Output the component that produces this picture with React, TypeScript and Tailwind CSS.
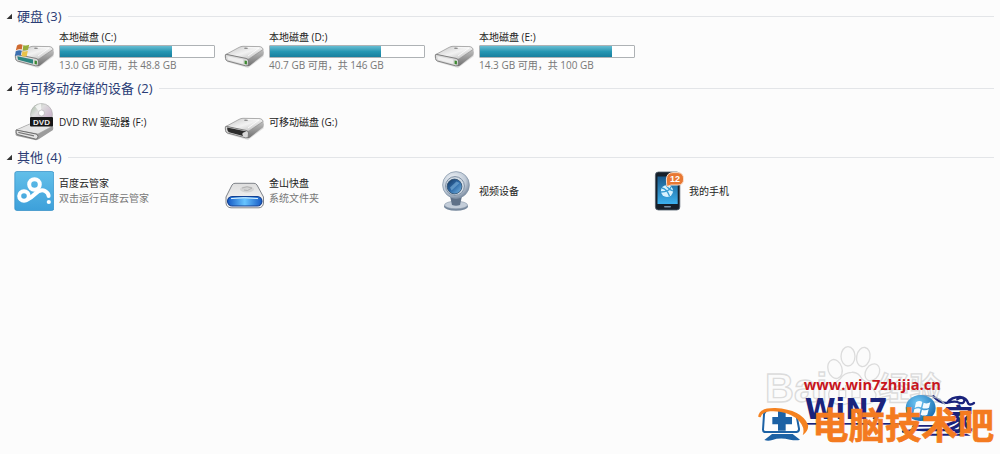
import { useState, type ReactNode } from "react";

function DriveShape({ variant = "local" }: { variant?: "local" | "system" | "removable" }) {
  return (
    <svg viewBox="0 0 40 40" className="h-10 w-10 shrink-0" aria-hidden="true">
      <defs>
        <linearGradient id={`top-${variant}`} x1="0" y1="0" x2="1" y2="1">
          <stop offset="0" stopColor="#c4c4c4" />
          <stop offset="0.5" stopColor="#f2f2f2" />
          <stop offset="1" stopColor="#adadad" />
        </linearGradient>
        <linearGradient id={`side-${variant}`} x1="0" y1="0" x2="0" y2="1">
          <stop offset="0" stopColor="#c4c4c4" />
          <stop offset="1" stopColor="#6f6f6f" />
        </linearGradient>
      </defs>
      <path d="M3 32 L24 38 L40 26 L38 24 L4 29Z" fill="#000" opacity="0.12" />
      <path d="M24 28 L39 19 Q40.4 22 39.4 25 L26 35.5 Q24 37 22 35.5Z" fill={`url(#side-${variant})`} />
      <path
        d="M1.8 24.5 L15 17.4 Q17 16.3 19 16.3 L36 16.6 Q38.4 17 39.2 19.4 L25 29 Q24 29.5 22 29.2Z"
        fill={`url(#top-${variant})`}
        stroke="#8f8f8f"
        strokeWidth="0.7"
      />
      <path d="M22 17.5 L35 18 L24 26" fill="none" stroke="#fff" strokeWidth="1" opacity="0.8" />
      <ellipse cx="22" cy="18.3" rx="2" ry="0.8" fill="#8b8b8b" />
      <path
        d="M2 24.3 L22 28.4 Q24.5 29 24.5 31 L24.2 34.5 Q24 36.4 21.5 35.8 L3.5 31 Q1.6 30.4 1.5 28.4 L1.3 26 Q1.2 24.3 2 24.3Z"
        fill="#d9d9d9"
        stroke="#777"
        strokeWidth="0.9"
      />
      {variant === "removable" ? (
        <path d="M3.2 25.6 L22.5 29.6 Q16.5 30.6 19 34 L5 30.2 Q3 29.4 3.2 25.6Z" fill="#2c2c2c" />
      ) : (
        <>
          <path d="M3.3 26.2 L19 29.6 L19 33.7 L4 29.7Z" fill={variant === "system" ? "#2c8580" : "#efefef"} />
          <path d="M20.6 30.4 L22.9 31 V34.6 L20.6 34Z" fill="#3d8a30" />
        </>
      )}
      {variant === "system" && (
        <g>
          <path d="M3 15.5 Q6 13.4 8.6 14.8 L7.8 19.6 Q5 18.4 1.8 20.4Z" fill="#cf6a31" />
          <path d="M9.4 15 Q12 16.3 15.2 14.8 L14 19.8 Q11.5 21 8.6 19.9Z" fill="#95ad3a" />
          <path d="M1.7 21.3 Q5 19.4 7.7 20.6 L6.8 25.6 Q4 24.5 1 26Z" fill="#3b6fb0" />
          <path d="M8.5 20.9 Q11 22 13.8 20.8 L12.8 26 Q10 27.2 7.6 26Z" fill="#e8c24a" />
        </g>
      )}
    </svg>
  );
}

function DvdIcon() {
  return (
    <svg viewBox="0 0 40 40" className="h-10 w-10 shrink-0" aria-hidden="true">
      <defs>
        <linearGradient id="disc" x1="0" y1="0" x2="1" y2="1">
          <stop offset="0" stopColor="#9db59c" />
          <stop offset="0.35" stopColor="#dedede" />
          <stop offset="0.7" stopColor="#ccb9cd" />
          <stop offset="1" stopColor="#a9a9a9" />
        </linearGradient>
      </defs>
      <path d="M2 28 L18 21 L37 22 Q40 24 39 28 L25 37 Q23 38.5 21 38 L3 34 Q1 33 1.5 30Z" fill="#9c9c9c" />
      <path d="M2 28 L18 21 L36 22 L39 24 L24 32Z" fill="#e6e6e6" stroke="#999" strokeWidth="0.6" />
      <path d="M2 28 L22 32 Q24 32.5 24 34.5 Q24 37.5 21.5 37.1 L3.4 32.5 Q1.8 31.5 2 28Z" fill="#e4e4e4" stroke="#666" strokeWidth="0.9" />
      <path d="M4 29.8 L20 33.2 V34.5 L4.5 30.9Z" fill="#777" />
      <circle cx="27.5" cy="12.5" r="11" fill="url(#disc)" stroke="#aaa" strokeWidth="0.6" />
      <path d="M27.5 12.5 L21 4.4 Q24 2 27 1.8Z" fill="#fff" opacity="0.7" />
      <circle cx="27.5" cy="11" r="3" fill="#fff" stroke="#aaa" strokeWidth="0.6" />
      <rect x="16" y="15" width="23" height="9.5" rx="1" fill="#171717" />
      <text x="27.5" y="22.6" textAnchor="middle" fontFamily="Liberation Sans, sans-serif" fontSize="8" fontWeight="bold" fill="#eee">
        DVD
      </text>
    </svg>
  );
}

function CloudIcon() {
  return (
    <svg viewBox="0 0 40 40" className="h-10 w-10 shrink-0" aria-hidden="true">
      <defs>
        <linearGradient id="cloud" x1="0" y1="0" x2="0" y2="1">
          <stop offset="0" stopColor="#62bfe9" />
          <stop offset="1" stopColor="#3da0da" />
        </linearGradient>
      </defs>
      <rect x="0.8" y="0.5" width="39" height="39" rx="2" fill="url(#cloud)" stroke="#2f8cc4" strokeWidth="0.7" />
      <g fill="none" stroke="#fff" strokeWidth="4" strokeLinecap="round">
        <circle cx="20.5" cy="13.5" r="5.3" />
        <circle cx="10" cy="25" r="4.8" />
        <path d="M13.5 28.5 Q18 26 21 23 Q26.5 17.6 31 20 Q34.6 22 34.6 25" />
      </g>
      <circle cx="34.8" cy="31" r="2.1" fill="#fff" />
    </svg>
  );
}

function KuaipanIcon() {
  return (
    <svg viewBox="0 0 40 40" className="h-10 w-10 shrink-0" aria-hidden="true">
      <defs>
        <linearGradient id="pan" x1="0" y1="0" x2="1" y2="0">
          <stop offset="0" stopColor="#1559c4" />
          <stop offset="0.5" stopColor="#67c4ff" />
          <stop offset="1" stopColor="#1559c4" />
        </linearGradient>
        <linearGradient id="pan-top" x1="0" y1="0" x2="0" y2="1">
          <stop offset="0" stopColor="#dedede" />
          <stop offset="1" stopColor="#fafafa" />
        </linearGradient>
      </defs>
      <path
        d="M8 14 Q9 12.3 11 12.3 H30 Q32 12.3 33 14 L39.5 26 V32 Q39 36.5 35 36.8 H7 Q2.5 36.5 2 32 V26Z"
        fill="url(#pan-top)"
        stroke="#7f8389"
        strokeWidth="1"
      />
      <ellipse cx="23" cy="18.2" rx="7" ry="3.2" fill="#d4d4d4" />
      <path d="M18 17 Q23 14.5 28 17 Q23 21 20 19" fill="none" stroke="#aaa" strokeWidth="0.8" />
      <rect x="3.5" y="25.5" width="34.5" height="9.5" rx="4.7" fill="url(#pan)" stroke="#123f91" strokeWidth="1.1" />
      <path d="M7 27.6 Q20 26 34 27.6" stroke="#d9f0ff" strokeWidth="1" fill="none" />
    </svg>
  );
}

function WebcamIcon() {
  return (
    <svg viewBox="0 0 40 40" className="h-10 w-10 shrink-0" aria-hidden="true">
      <defs>
        <radialGradient id="cam" cx="0.4" cy="0.35" r="0.7">
          <stop offset="0" stopColor="#f8fafc" />
          <stop offset="0.65" stopColor="#c0cbd8" />
          <stop offset="1" stopColor="#718399" />
        </radialGradient>
        <linearGradient id="lens" x1="0" y1="0" x2="1" y2="1">
          <stop offset="0" stopColor="#15365e" />
          <stop offset="0.5" stopColor="#2f6ba8" />
          <stop offset="1" stopColor="#78b8e6" />
        </linearGradient>
      </defs>
      <ellipse cx="22" cy="35.5" rx="12" ry="4.2" fill="#75879c" />
      <ellipse cx="22" cy="34" rx="11.5" ry="3.8" fill="#c3cdd9" stroke="#8796a7" strokeWidth="0.6" />
      <path d="M16 25 H28 L26 34 Q22 35.5 18 34Z" fill="#5f7188" />
      <circle cx="22" cy="14" r="13.4" fill="url(#cam)" stroke="#8293a6" strokeWidth="0.7" />
      <circle cx="21" cy="15" r="9.4" fill="#d3dce5" stroke="#7d8ea2" strokeWidth="1" />
      <circle cx="20.5" cy="15.5" r="7.4" fill="url(#lens)" stroke="#31506f" strokeWidth="0.8" />
      <path d="M16 16.5 L22.5 10.5 L25.5 12 L17.5 19.5Z" fill="#9ccbee" opacity="0.45" />
    </svg>
  );
}

function PhoneIcon() {
  return (
    <svg viewBox="0 0 40 40" className="h-10 w-10 shrink-0" aria-hidden="true">
      <defs>
        <linearGradient id="screen" x1="0" y1="0" x2="0" y2="1">
          <stop offset="0" stopColor="#1a5a8b" />
          <stop offset="1" stopColor="#3cb1ef" />
        </linearGradient>
      </defs>
      <rect x="11.4" y="1" width="24.4" height="38" rx="3" fill="#17202a" stroke="#52606d" strokeWidth="0.8" />
      <rect x="13.5" y="5.5" width="20.2" height="27.5" fill="url(#screen)" />
      <rect x="20" y="35" width="7" height="1.6" rx="0.8" fill="#7790a5" />
      <circle cx="23" cy="20" r="6.1" fill="#d8f2ff" />
      <path d="M18 17 Q23 18 25.5 25 M17 21 Q25 21 27 16 M22 14 Q24 18 29 20" fill="none" stroke="#379cd2" strokeWidth="1.3" />
      <path d="M23 15.5 Q22.4 12.5 22.4 8 Q23 1.6 29 1.6 H34 Q39.6 2 39.6 8 Q39.6 14 34 14 H27Z" fill="#e87833" stroke="#f9dfcc" strokeWidth="1" />
      <text x="31" y="11" textAnchor="middle" fontFamily="Liberation Sans, sans-serif" fontSize="9" fontWeight="bold" fill="#fff">
        12
      </text>
    </svg>
  );
}

function Group({ title, count, children }: { title: string; count: number; children: ReactNode }) {
  const [open, setOpen] = useState(true);
  return (
    <section>
      <h2 className="flex h-5 items-center px-1.5 text-[13px] leading-5 text-[#2b3c75]">
        <button
          type="button"
          aria-expanded={open}
          onClick={() => setOpen(!open)}
          className="flex items-center gap-1 whitespace-nowrap"
        >
          <svg viewBox="0 0 7 7" className={open ? "h-[7px] w-[7px]" : "h-[7px] w-[7px] -rotate-45"} aria-hidden="true">
            <path d="M6 0.8 V6 H0.6Z" fill="#333" />
          </svg>
          <span>
            {title} ({count})
          </span>
        </button>
        <span className="ml-1.5 h-px flex-1 bg-[#e3e5e8]" />
      </h2>
      {open && children}
    </section>
  );
}

const columns = "grid grid-cols-[repeat(auto-fill,210px)] pl-3.5";

function Item({ icon, name, note }: { icon: ReactNode; name: string; note?: string }) {
  return (
    <li className="flex items-center gap-[5px]">
      {icon}
      <div className="leading-[15px] whitespace-nowrap">
        <p>{name}</p>
        {note && <p className="text-[#777]">{note}</p>}
      </div>
    </li>
  );
}

const drives = [
  { name: "本地磁盘 (C:)", note: "13.0 GB 可用，共 48.8 GB", used: 73, system: true },
  { name: "本地磁盘 (D:)", note: "40.7 GB 可用，共 146 GB", used: 72, system: false },
  { name: "本地磁盘 (E:)", note: "14.3 GB 可用，共 100 GB", used: 86, system: false },
];

function Watermark() {
  return (
    <svg viewBox="0 0 750 357" className="absolute right-0 bottom-0 h-[119px] w-[250px]" role="img" aria-label="电脑技术吧">
      <defs>
        <radialGradient id="orb" cx="0.4" cy="0.3" r="0.75">
          <stop offset="0" stopColor="#72c8f5" />
          <stop offset="1" stopColor="#1269ae" />
        </radialGradient>
      </defs>
      <g fill="#fbfbfb" stroke="#dcdcdc" strokeWidth="4">
        <text x="45" y="200" fontFamily="Liberation Sans, sans-serif" fontSize="120" fontWeight="bold">
          Bai
        </text>
        <text x="385" y="195" fontFamily="Noto Sans CJK SC, sans-serif" fontSize="94" fontWeight="bold">
          经验
        </text>
        <ellipse cx="255" cy="102" rx="21" ry="29" transform="rotate(-18 255 102)" />
        <ellipse cx="294" cy="64" rx="21" ry="29" />
        <ellipse cx="340" cy="66" rx="20" ry="29" transform="rotate(10 340 66)" />
        <ellipse cx="367" cy="112" rx="20" ry="27" transform="rotate(32 367 112)" />
        <path d="M305 112 Q324 110 336 132 Q370 155 378 178 Q378 210 340 207 Q310 200 284 208 Q235 212 236 176 Q240 154 270 132 Q284 112 305 112Z" />
        <path d="M287 150 V188 H267 V165 H286 M306 160 V188 H330 V160" fill="none" />
      </g>
      <text x="161" y="165" fontFamily="Open Sans, Noto Sans, sans-serif" fontSize="44" fontWeight="bold" fill="#c8161d">
        www.win7zhijia.cn
      </text>
      <g fill="#1a237c">
        <text x="164" y="252" fontFamily="DejaVu Sans, sans-serif" fontSize="84" fontWeight="bold">
          WiN7
        </text>
        <rect x="164" y="264" width="300" height="5" />
        <path d="M455 287 Q510 276 600 283 H664 L668 289 H520 Q480 284 458 294Z" />
        <path d="M490 270 H590 L600 275 H485Z" />
        <path d="M530 296 H650 L662 302 H522Z" />
        <text x="582" y="286" fontFamily="Noto Sans CJK SC, sans-serif" fontSize="88" fontWeight="bold">
          家
        </text>
      </g>
      <path
        d="M550 184 Q572 208 592 203 Q620 196 628 204 Q644 207 643 194 Q636 184 622 193 M592 203 Q604 186 630 186 Q650 188 655 206 Q662 212 672 204"
        fill="none"
        stroke="#1a237c"
        strokeWidth="7"
        strokeLinecap="round"
      />
      <path d="M472 245 Q466 180 525 181 Q570 185 585 208" fill="none" stroke="#9fa8ba" strokeWidth="4" />
      <ellipse cx="512" cy="219" rx="45" ry="39" fill="url(#orb)" />
      <g fill="#f5fbff">
        <path d="M498 202 Q508 195 517 201 L513 217 Q504 212 494 219Z" />
        <path d="M521 203 Q530 208 541 202 L537 218 Q527 223 517 219Z" />
        <path d="M493 223 Q504 217 512 222 L508 237 Q499 233 489 239Z" />
        <path d="M516 224 Q526 228 536 223 L532 239 Q522 244 512 239Z" />
      </g>
      <path d="M48 233 Q43 230 42 239 L39 284 Q39 291 47 291 H140 Q148 290 147 281 L139 238" fill="#fff" stroke="#1d62a5" strokeWidth="6" />
      <path d="M84 227 H107 V246 H126 V268 H107 V287 H84 V268 H67 V246 H84Z" fill="#1d62a5" />
      <path d="M66 297 H128 L150 314 Q140 318 120 314 Q90 307 67 315 Q54 320 43 315Z" fill="#1d62a5" />
      <path d="M25 246 Q25 218 76 219 Q155 224 174 269 Q177 287 158 301 Q168 274 138 249 Q105 226 60 229 Q35 232 32 247Z" fill="#f58220" />
      <text
        x="187"
        y="311"
        fontFamily="Noto Sans CJK SC, sans-serif"
        fontSize="109"
        fontWeight="bold"
        fill="#f47b20"
        stroke="#f47b20"
        strokeWidth="2"
      >
        电脑技术吧
      </text>
    </svg>
  );
}

export default function App() {
  return (
    <main className="relative min-h-screen bg-[#fcfcfc] pt-1.5 font-['Open_Sans','Noto_Sans_CJK_SC',sans-serif] text-[10px] text-[#222]">
      <Group title="硬盘" count={3}>
        <ul className={`${columns} pt-1 pb-2`}>
          {drives.map((d) => (
            <li key={d.name} className="flex h-10 gap-[5px]">
              <DriveShape variant={d.system ? "system" : "local"} />
              <div className="w-[156px] leading-[15px] whitespace-nowrap">
                <p>{d.name}</p>
                <div
                  role="meter"
                  aria-label={d.name}
                  aria-valuemin={0}
                  aria-valuemax={100}
                  aria-valuenow={d.used}
                  className="h-[13px] rounded-[1px] border border-[#aeb2b5] bg-white"
                >
                  <div
                    className="h-full bg-linear-to-b from-[#65bdd2] via-[#2697b3] to-[#187f9e]"
                    style={{ width: `${d.used}%` }}
                  />
                </div>
                <p className="text-[#777]">{d.note}</p>
              </div>
            </li>
          ))}
        </ul>
      </Group>
      <Group title="有可移动存储的设备" count={2}>
        <ul className={`${columns} pt-1 pb-[5px]`}>
          <Item icon={<DvdIcon />} name="DVD RW 驱动器 (F:)" />
          <Item icon={<DriveShape variant="removable" />} name="可移动磁盘 (G:)" />
        </ul>
      </Group>
      <Group title="其他" count={4}>
        <ul className={`${columns} pt-1`}>
          <Item icon={<CloudIcon />} name="百度云管家" note="双击运行百度云管家" />
          <Item icon={<KuaipanIcon />} name="金山快盘" note="系统文件夹" />
          <Item icon={<WebcamIcon />} name="视频设备" />
          <Item icon={<PhoneIcon />} name="我的手机" />
        </ul>
      </Group>
      <Watermark />
    </main>
  );
}
